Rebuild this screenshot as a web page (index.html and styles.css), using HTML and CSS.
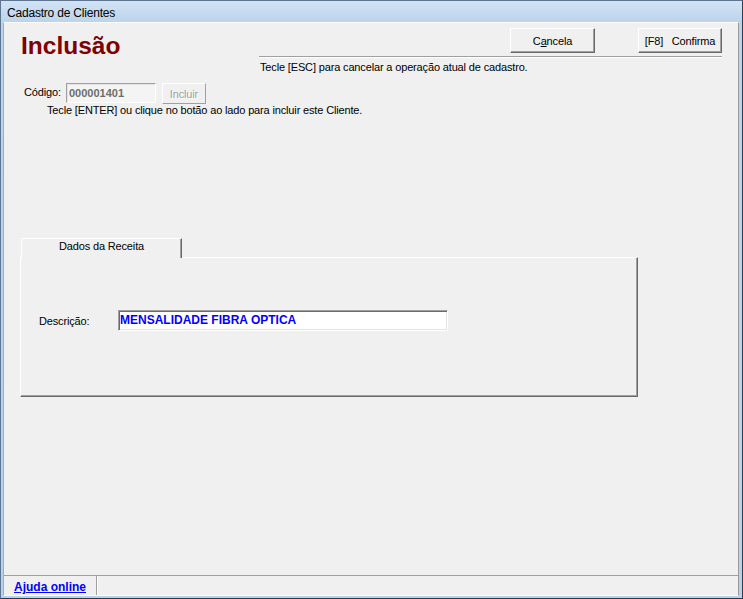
FILE: index.html
```html
<!DOCTYPE html>
<html lang="pt-BR">
<head>
    <meta charset="UTF-8">
    <meta name="viewport" content="width=device-width, initial-scale=1.0">
    <title>Cadastro de Clientes</title>
    <link rel="stylesheet" href="styles.css">
</head>
<body>

<div class="window">
    <div class="titlebar">Cadastro de Clientes</div>

    <div class="client">
        <div class="header">
            <h1 class="heading">Inclusão</h1>
            <div class="headerRight">
                <div class="actions">
                    <button class="btn btnCancel">C<u>a</u>ncela</button>
                    <button class="btn btnConfirm">[F8]&nbsp;&nbsp; Confirma</button>
                </div>
                <div class="rule"></div>
                <p class="hintEsc">Tecle [ESC] para cancelar a operação atual de cadastro.</p>
            </div>
        </div>

        <div class="codeRow">
            <label class="codeLabel" for="codigo">Código:</label>
            <input class="codeInput" type="text" id="codigo" value="000001401" readonly>
            <button class="btnSmall" disabled>Incluir</button>
        </div>
        <p class="hintEnter">Tecle [ENTER] ou clique no botão ao lado para incluir este Cliente.</p>

        <div class="tabs">
            <div class="tab">Dados da Receita</div>
            <div class="tabPanel">
                <div class="descRow">
                    <label class="descLabel" for="descricao">Descrição:</label>
                    <input class="descInput" type="text" id="descricao" value="MENSALIDADE FIBRA OPTICA" spellcheck="false">
                </div>
            </div>
        </div>

        <div class="statusbar">
            <div class="statusHelp"><a href="#">Ajuda online</a></div>
            <div class="statusRest"></div>
        </div>
    </div>
</div>

</body>
</html>
```

FILE: styles.css
```css
*{
    margin: 0px;
    padding: 0px;
    box-sizing: border-box;
}
body {
    width: 743px;
    height: 599px;
    overflow: hidden;
    font-family: "Liberation Sans", Arial, sans-serif;
    font-size: 11px;
    letter-spacing: -0.15px;
    color: #000;
    background: #bcd4ec;
}
.window {
    width: 743px;
    height: 599px;
    display: flex;
    flex-direction: column;
    border: 1px solid #5d7590;
    border-bottom-color: #26394d;
    border-right-color: #2b3e52;
    padding: 0 3px 2px 2px;
    background: linear-gradient(#d2e3f5 0px, #bcd3eb 21px, #b9d2ec 100%);
}
.titlebar {
    height: 21px;
    padding: 4px 0 0 4px;
    font-size: 12px;
    line-height: 16px;
    letter-spacing: -0.2px;
    color: #000;
}
.client {
    flex: 1;
    display: flex;
    flex-direction: column;
    background-color: #f0f0f0;
    border-left: 1px solid #98aec5;
    border-right: 1px solid #9a9a9a;
    border-top: 1px solid #fcfcfc;
    border-bottom: 1px solid #fcfcfc;
}
.header {
    display: flex;
    align-items: flex-start;
}
.heading {
    margin: 10px 0 0 17px;
    font-size: 24.5px;
    line-height: 26px;
    font-weight: bold;
    letter-spacing: 0;
    color: #800000;
}
.headerRight {
    margin-left: auto;
    margin-right: 16px;
    width: 463px;
}
.actions {
    display: flex;
    justify-content: flex-end;
    gap: 43px;
    margin-top: 5px;
}
.btn {
    height: 25px;
    font-family: "Liberation Sans", Arial, sans-serif;
    font-size: 11px;
    letter-spacing: -0.15px;
    color: #000;
    background-color: #f0f0f0;
    border: 1px solid;
    border-color: #fff #696969 #696969 #fff;
    box-shadow: inset -1px -1px #a0a0a0;
}
.btnCancel {
    width: 85px;
}
.btnConfirm {
    width: 84px;
}
.rule {
    margin-top: 3px;
    border-top: 1px solid #a0a0a0;
    border-bottom: 1px solid #fff;
}
.hintEsc {
    margin-top: 3px;
    padding-left: 1px;
    line-height: 13px;
}
.codeRow {
    display: flex;
    align-items: flex-start;
    margin: 9px 0 0 20px;
}
.codeLabel {
    width: 42px;
    line-height: 19px;
}
.codeInput {
    width: 90px;
    height: 20px;
    padding: 0 0 1px 2px;
    font-family: "Liberation Sans", Arial, sans-serif;
    font-size: 11px;
    font-weight: bold;
    color: #6d6d6d;
    background-color: #f4f4f4;
    border: 1px solid;
    border-color: #a0a0a0 #fff #fff #a0a0a0;
    box-shadow: inset 1px 1px #e3e3e3;
    outline: none;
}
.btnSmall {
    margin-left: 6px;
    width: 44px;
    height: 21px;
    font-family: "Liberation Sans", Arial, sans-serif;
    font-size: 11px;
    letter-spacing: -0.15px;
    color: #a0a0a0;
    background-color: #f0f0f0;
    border: 1px solid;
    border-color: #fff #a0a0a0 #a0a0a0 #fff;
    text-shadow: 1px 1px #fff;
}
.hintEnter {
    margin-left: 43px;
    line-height: 13px;
}
.tabs {
    margin: 121px 0 0 16px;
    width: 618px;
}
.tab {
    position: relative;
    z-index: 1;
    margin: 0 0 -1px 1px;
    width: 161px;
    height: 20px;
    line-height: 15px;
    text-align: center;
    background-color: #f0f0f0;
    border-top: 1px solid #fff;
    border-left: 1px solid #fff;
    border-right: 1px solid #696969;
    border-top-left-radius: 2px;
    box-shadow: inset -1px 0 #a0a0a0;
}
.tabPanel {
    height: 140px;
    padding: 52px 0 0 18px;
    border-top: 1px solid #fff;
    border-left: 1px solid #fff;
    border-right: 1px solid #696969;
    border-bottom: 1px solid #696969;
    box-shadow: inset -1px -1px #a0a0a0;
}
.descRow {
    display: flex;
    align-items: center;
}
.descLabel {
    width: 79px;
}
.descInput {
    width: 330px;
    height: 21px;
    padding: 0 0 1px 1px;
    font-family: "Liberation Sans", Arial, sans-serif;
    font-size: 12px;
    font-weight: bold;
    letter-spacing: 0;
    color: #0000ff;
    background-color: #fff;
    border: 1px solid;
    border-color: #a0a0a0 #fff #fff #a0a0a0;
    box-shadow: inset 1px 1px #696969, inset -1px -1px #e3e3e3;
    outline: none;
}
.statusbar {
    margin-top: auto;
    height: 20px;
    display: flex;
    border-top: 1px solid #a0a0a0;
}
.statusHelp {
    width: 93px;
    padding: 4px 0 0 10px;
    border-right: 1px solid #a0a0a0;
    line-height: 14px;
}
.statusHelp a {
    font-size: 12px;
    font-weight: bold;
    letter-spacing: 0;
    color: #0000ff;
}
.statusRest {
    flex: 1;
    border-left: 1px solid #fff;
}
```
